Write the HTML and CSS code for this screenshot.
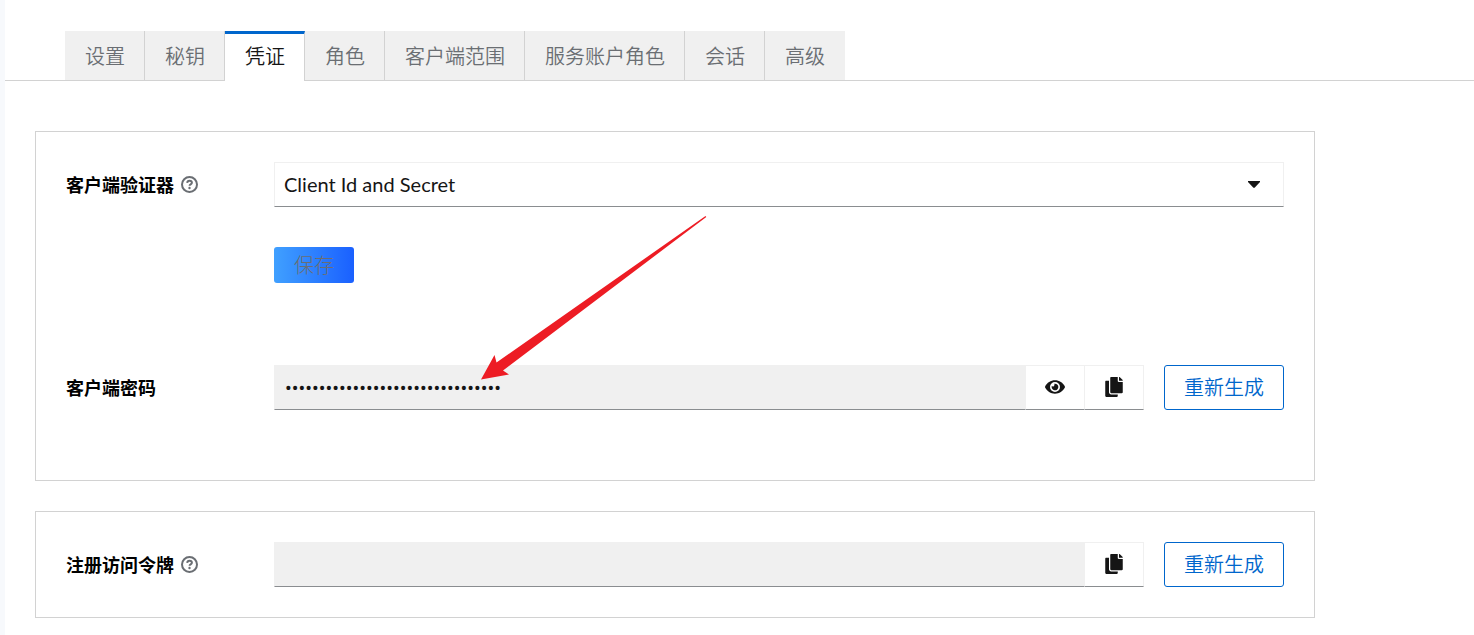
FILE: index.html
```
<!DOCTYPE html>
<html lang="zh-CN">
<head>
    <meta charset="UTF-8">
    <meta name="viewport" content="width=device-width, initial-scale=1.0">
    <title>凭证</title>
    <link rel="stylesheet" href="styles.css">
</head>
<body>
    <!-- Shared icons -->
    <svg class="icon-defs" aria-hidden="true">
        <symbol id="icon-help" viewBox="0 0 17 17">
            <circle cx="8.5" cy="8.5" r="7.5" fill="none" stroke="currentColor" stroke-width="2"/>
            <path d="M6.2 6.9C6.3 5.5 7.2 4.8 8.5 4.8c1.4 0 2.4.7 2.4 1.9 0 1.7-2.300 1.600-2.300 3.100" fill="none" stroke="currentColor" stroke-width="2"/>
            <circle cx="8.5" cy="12" r="1.2" fill="currentColor"/>
        </symbol>
        <symbol id="icon-eye" viewBox="0 0 576 512">
            <path fill="currentColor" d="M572.52 241.4C518.29 135.59 410.93 64 288 64S57.68 135.64 3.48 241.41a32.35 32.35 0 0 0 0 29.19C57.71 376.41 165.07 448 288 448s230.32-71.64 284.52-177.41a32.35 32.35 0 0 0 0-29.19zM288 400a144 144 0 1 1 144-144 143.93 143.93 0 0 1-144 144zm0-240a95.31 95.31 0 0 0-25.31 3.79 47.85 47.85 0 0 1-66.9 66.9A95.78 95.78 0 1 0 288 160z"/>
        </symbol>
        <symbol id="icon-copy" viewBox="0 0 448 512">
            <path fill="currentColor" d="M320 448v40c0 13.255-10.745 24-24 24H24c-13.255 0-24-10.745-24-24V120c0-13.255 10.745-24 24-24h72v296c0 30.879 25.121 56 56 56h168zm0-344V0H152c-13.255 0-24 10.745-24 24v368c0 13.255 10.745 24 24 24h272c13.255 0 24-10.745 24-24V128H344c-13.2 0-24-10.8-24-24zm120.971-31.029L375.029 7.029A24 24 0 0 0 358.059 0H352v96h96v-6.059a24 24 0 0 0-7.029-16.97z"/>
        </symbol>
    </svg>

    <main class="page">
        <nav class="tabs">
            <a class="tab" href="#settings">设置</a>
            <a class="tab" href="#keys">秘钥</a>
            <a class="tab active" href="#credentials" aria-current="page">凭证</a>
            <a class="tab" href="#roles">角色</a>
            <a class="tab" href="#scopes">客户端范围</a>
            <a class="tab" href="#service-roles">服务账户角色</a>
            <a class="tab" href="#sessions">会话</a>
            <a class="tab" href="#advanced">高级</a>
        </nav>

        <form class="content">
            <section class="card card-secret">
                <div class="row">
                    <div class="label-cell">
                        <label for="authenticator">客户端验证器</label>
                        <button type="button" class="help" aria-label="帮助"><svg><use href="#icon-help"/></svg></button>
                    </div>
                    <div class="select-wrap">
                        <select id="authenticator">
                            <option>Client Id and Secret</option>
                        </select>
                        <svg class="caret" viewBox="0 0 12 7"><path d="M0 0h12v1L6.600 6.700h-1.200L0 1z" fill="currentColor"/></svg>
                    </div>
                </div>
                <div class="row save-row">
                    <button type="submit" class="save" disabled>保存</button>
                </div>
                <div class="row">
                    <div class="label-cell">
                        <label for="secret">客户端密码</label>
                    </div>
                    <div class="input-group">
                        <input type="password" id="secret" value="0123456789abcdef0123456789abcdef" autocomplete="off" readonly>
                        <button type="button" class="icon-button" aria-label="显示"><svg class="icon-eye"><use href="#icon-eye"/></svg></button>
                        <button type="button" class="icon-button" aria-label="复制"><svg class="icon-copy"><use href="#icon-copy"/></svg></button>
                    </div>
                    <button type="button" class="regenerate">重新生成</button>
                </div>
                <svg class="arrow" viewBox="0 0 226 164" aria-hidden="true">
                    <path d="M0 163.500L13.500 139l2 7.500L224.500 0l.8 1L22 154.500l6 4z" fill="#ed1c24"/>
                </svg>
            </section>

            <section class="card">
                <div class="row">
                    <div class="label-cell">
                        <label for="token">注册访问令牌</label>
                        <button type="button" class="help" aria-label="帮助"><svg><use href="#icon-help"/></svg></button>
                    </div>
                    <div class="input-group">
                        <input type="text" id="token" readonly>
                        <button type="button" class="icon-button" aria-label="复制"><svg class="icon-copy"><use href="#icon-copy"/></svg></button>
                    </div>
                    <button type="button" class="regenerate">重新生成</button>
                </div>
            </section>
        </form>
    </main>
</body>
</html>
```
FILE: styles.css
```
* {
    box-sizing: border-box;
}
body {
    margin: 0;
    padding-left: 5px;
    background-color: #f7f9fc;
    color: #151515;
    font-family: Lato, "Noto Sans CJK SC", sans-serif;
    font-size: 20px;
    line-height: 30px;
}
button, input, select {
    font: inherit;
    color: inherit;
    margin: 0;
}
svg {
    display: block;
}
.icon-defs {
    display: none;
}
.page {
    min-height: 100vh;
    padding-top: 31px;
    background-color: #fff;
}

/* Tabs */
.tabs {
    display: flex;
    padding-left: 60px;
    border-bottom: 1px solid #d2d2d2;
}
.tab {
    height: 49px;
    padding: 10px 19px 0 20px;
    border-right: 1px solid #d2d2d2;
    background-color: #f0f0f0;
    color: #6a6e73;
    font-weight: 350;
    text-decoration: none;
    white-space: nowrap;
}
.tab:last-child {
    border-right-color: #f0f0f0;
}
.tab.active {
    height: 50px;
    margin-bottom: -1px; /* Covers the line under the tabs */
    padding-top: 7px;
    border-top: 3px solid #06c;
    background-color: #fff;
    color: #151515;
}

/* Cards */
.content {
    display: flex;
    flex-direction: column;
    gap: 30px;
    max-width: 1340px;
    padding: 50px 30px 17px;
}
.card {
    position: relative;
    padding: 30px;
    border: 1px solid #d2d2d2;
}
.card-secret {
    padding-bottom: 70px;
}
.row {
    display: flex;
    align-items: center;
}
.label-cell {
    display: flex;
    flex: 0 0 208px;
    align-items: center;
    gap: 7px;
    color: #000;
    font-size: 18px;
    font-weight: 700;
}
.help {
    padding: 0;
    border: 0;
    background: none;
    color: #6a6e73;
}
.help svg {
    width: 17px;
    height: 17px;
}

/* Fields */
.select-wrap {
    position: relative;
    flex: 1;
}
select {
    display: block;
    width: 100%;
    height: 45px;
    padding: 0 40px 2px 9px;
    border: 1px solid #f0f0f0;
    border-bottom-color: #8a8d90;
    border-radius: 0;
    background-color: #fff;
    appearance: none;
}
.caret {
    position: absolute;
    top: 19px;
    right: 24px;
    width: 12px;
    height: 7px;
    pointer-events: none;
}
.input-group {
    display: flex;
    flex: 1;
    margin-right: 20px;
}
input {
    flex: 1;
    min-width: 0;
    height: 45px;
    padding: 0 10px;
    border: 1px solid #f0f0f0;
    border-bottom-color: #8a8d90;
    border-radius: 0;
    background-color: #f0f0f0;
    font-family: Roboto, sans-serif;
}
.icon-button {
    display: flex;
    align-items: center;
    justify-content: center;
    width: 60px;
    height: 45px;
    margin-left: -1px;
    padding: 0 0 2px;
    border: 1px solid #f0f0f0;
    border-bottom-color: #8a8d90;
    background-color: #fff;
}
.icon-eye {
    width: 20px;
    height: 18px;
}
.icon-copy {
    width: 18px;
    height: 20px;
}

/* Buttons */
.save-row {
    padding: 40px 0 82px 208px;
}
.save {
    width: 80px;
    height: 36px;
    padding: 0;
    border: 0;
    border-radius: 3px;
    background: linear-gradient(to right, #40a0ff, #1a60ff);
    color: #6a6e73;
    font-weight: 300;
}
.regenerate {
    width: 120px;
    height: 45px;
    padding: 0 0 2px;
    border: 1px solid #06c;
    border-radius: 3px;
    background-color: #fff;
    color: #06c;
    font-weight: 350;
}

/* Pointer to the secret field */
.arrow {
    position: absolute;
    top: 84px;
    left: 445px;
    width: 226px;
    height: 164px;
    pointer-events: none;
}
```
